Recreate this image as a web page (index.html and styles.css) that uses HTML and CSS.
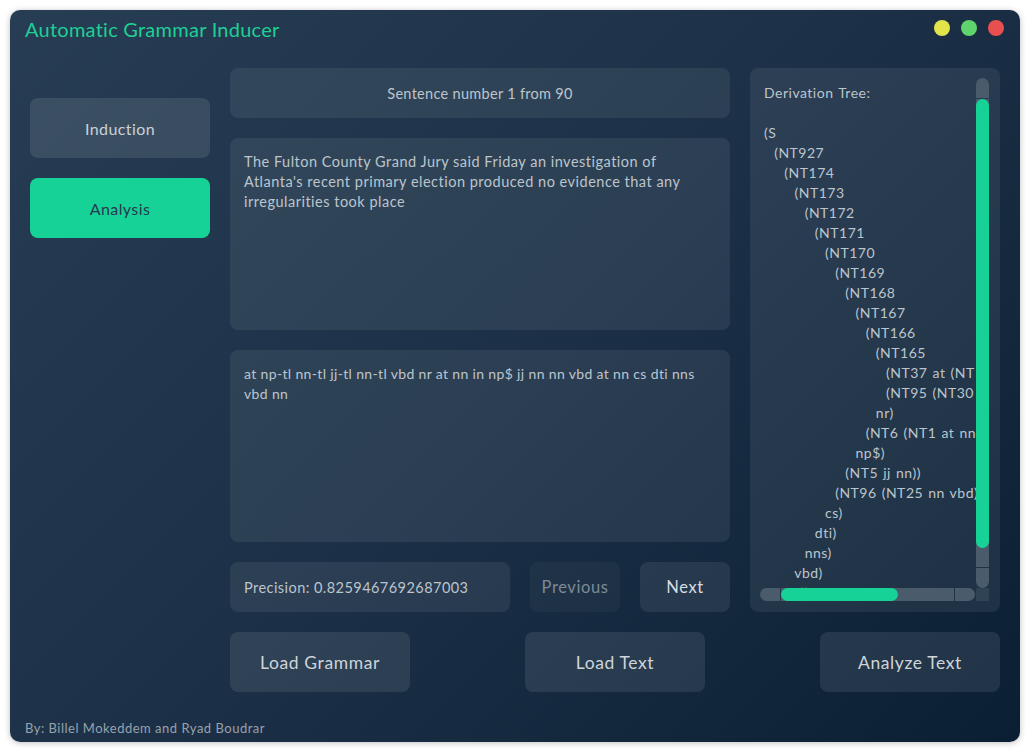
FILE: index.html
```html
<!DOCTYPE html>
<html>
<head>
<meta charset="utf-8">
<link rel="stylesheet" href="styles.css">
</head>
<body>
<div class="window">
  <div class="header">
    <div class="title">Automatic Grammar Inducer</div>
    <div class="dots">
      <span class="dot yellow"></span>
      <span class="dot green"></span>
      <span class="dot red"></span>
    </div>
  </div>
  <div class="main">
    <div class="sidebar">
      <div class="side-btn">Induction</div>
      <div class="side-btn active">Analysis</div>
    </div>
    <div class="center">
      <div class="panel sentence">Sentence number 1 from 90</div>
      <div class="panel textbox sentence-text">The Fulton County Grand Jury said Friday an investigation of Atlanta's recent primary election produced no evidence that any irregularities took place</div>
      <div class="panel textbox tags-text">at np-tl nn-tl jj-tl nn-tl vbd nr at nn in np$ jj nn nn vbd at nn cs dti nns vbd nn</div>
      <div class="nav-row">
        <div class="panel precision">Precision: 0.8259467692687003</div>
        <div class="nav-btn prev">Previous</div>
        <div class="nav-btn next">Next</div>
      </div>
    </div>
    <div class="panel tree">
      <div class="tree-view">
<pre class="tree-text">Derivation Tree:

(S
  (NT927
    (NT174
      (NT173
        (NT172
          (NT171
            (NT170
              (NT169
                (NT168
                  (NT167
                    (NT166
                      (NT165
                        (NT37 at (NT14 nn-tl nn-tl))
                        (NT95 (NT30 jj-tl nn-tl) vbd)
                      nr)
                    (NT6 (NT1 at nn) in)
                  np$)
                (NT5 jj nn))
              (NT96 (NT25 nn vbd) at)
            cs)
          dti)
        nns)
      vbd)
    nn))</pre>
      </div>
      <div class="vscroll">
        <span class="sb-btn top"></span>
        <span class="vtrack"><span class="vthumb"></span></span>
        <span class="sb-btn bottom"></span>
      </div>
      <div class="hscroll">
        <span class="sb-btn left"></span>
        <span class="htrack"><span class="hthumb"></span></span>
        <span class="sb-btn right"></span>
      </div>
      <div class="corner"></div>
    </div>
  </div>
  <div class="actions">
    <div class="action-btn">Load Grammar</div>
    <div class="action-btn">Load Text</div>
    <div class="action-btn">Analyze Text</div>
  </div>
  <div class="footer">By: Billel Mokeddem and Ryad Boudrar</div>
</div>
</body>
</html>
```
FILE: styles.css
```css
* { box-sizing: border-box; }
html, body { margin: 0; padding: 0; background: #ffffff; }
body {
  font-family: "Lato", "Noto Sans", sans-serif;
  width: 1030px;
  height: 752px;
  padding: 10px;
}
.window {
  width: 1010px;
  height: 732px;
  border-radius: 10px;
  background: linear-gradient(135deg, #273d53 0%, #1d3248 45%, #0b1f34 100%);
  box-shadow: 0 1px 6px rgba(0,0,0,0.25);
  display: flex;
  flex-direction: column;
  overflow: hidden;
}
.header {
  height: 58px;
  display: flex;
  justify-content: space-between;
  align-items: flex-start;
  padding: 7px 16px 0 15px;
}
.title {
  color: #1ecf96;
  font-size: 20px;
  line-height: 24px;
  letter-spacing: 0.25px;
}
.dots { display: flex; gap: 11px; padding-top: 3px; }
.dot { width: 16px; height: 16px; border-radius: 50%; display: block; }
.dot.yellow { background: #e3e34a; }
.dot.green { background: #5fd46c; }
.dot.red { background: #e85050; }

.main {
  display: grid;
  grid-template-columns: 180px 500px 250px;
  column-gap: 20px;
  padding-left: 20px;
  height: 544px;
}
.sidebar {
  display: flex;
  flex-direction: column;
  gap: 20px;
  padding-top: 30px;
}
.side-btn {
  height: 60px;
  border-radius: 8px;
  background: rgba(255,255,255,0.1);
  color: #c9d1d8;
  font-size: 16px;
  letter-spacing: 0.4px;
  display: flex;
  align-items: center;
  justify-content: center;
}
.side-btn.active {
  background: #17d296;
  color: #243a50;
}
.center {
  display: flex;
  flex-direction: column;
  gap: 20px;
}
.panel {
  background: rgba(255,255,255,0.07);
  border-radius: 8px;
  color: #bcc5cd;
  font-size: 14px;
}
.sentence {
  height: 50px;
  display: flex;
  align-items: center;
  justify-content: center;
  font-size: 14.5px;
  letter-spacing: 0.3px;
}
.textbox {
  height: 192px;
  padding: 14px 14px;
  line-height: 20px;
}
.sentence-text {
  font-size: 14.5px;
  letter-spacing: 0.5px;
}
.tags-text {
  font-size: 14px;
  letter-spacing: 0.35px;
}
.nav-row {
  display: flex;
  gap: 20px;
  height: 50px;
}
.precision {
  width: 280px;
  display: flex;
  align-items: center;
  padding-left: 14px;
  font-size: 14.5px;
  letter-spacing: 0.45px;
}
.nav-btn {
  width: 90px;
  border-radius: 8px;
  display: flex;
  align-items: center;
  justify-content: center;
  font-size: 16.5px;
  letter-spacing: 0.6px;
}
.nav-btn.prev { background: rgba(255,255,255,0.035); color: #7d8a97; }
.nav-btn.next { background: rgba(255,255,255,0.08); color: #d5dce2; }

.tree {
  position: relative;
  height: 544px;
  overflow: hidden;
}
.tree-view {
  width: 225px;
  height: 520px;
  overflow: hidden;
  margin-left: 14px;
  padding-top: 15px;
}
.tree-text {
  margin: 0;
  font-family: "Lato", "Noto Sans", sans-serif;
  font-size: 14px;
  line-height: 20px;
  color: #bcc5cd;
  white-space: pre;
  letter-spacing: 0.5px;
  word-spacing: 1px;
}
.vscroll {
  position: absolute;
  left: 226px;
  top: 10px;
  width: 13px;
  height: 510px;
  display: flex;
  flex-direction: column;
  gap: 1px;
}
.sb-btn { background: #4a5b6b; display: block; }
.vscroll .sb-btn { height: 20px; }
.vscroll .sb-btn.top { border-radius: 7px 7px 0 0; }
.vscroll .sb-btn.bottom { border-radius: 0 0 7px 7px; }
.vtrack { flex: 1; background: #4a5b6b; display: block; position: relative; }
.vthumb {
  position: absolute;
  left: 0; right: 0; top: 0;
  height: 449px;
  background: #17d296;
  border-radius: 7px;
}
.hscroll {
  position: absolute;
  left: 10px;
  top: 520px;
  width: 215px;
  height: 13px;
  display: flex;
  gap: 1px;
}
.hscroll .sb-btn { width: 20px; }
.hscroll .sb-btn.left { border-radius: 7px 0 0 7px; }
.hscroll .sb-btn.right { border-radius: 0 7px 7px 0; }
.htrack { flex: 1; background: #4a5b6b; display: block; position: relative; }
.hthumb {
  position: absolute;
  top: 0; bottom: 0; left: 0;
  width: 117px;
  background: #17d296;
  border-radius: 7px;
}
.corner {
  position: absolute;
  left: 226px;
  top: 520px;
  width: 13px;
  height: 13px;
  background: #2f4355;
}

.actions {
  display: flex;
  justify-content: space-between;
  padding: 0 20px 0 220px;
  margin-top: 20px;
  height: 60px;
}
.action-btn {
  width: 180px;
  border-radius: 8px;
  background: rgba(255,255,255,0.09);
  color: #cdd4da;
  font-size: 17.5px;
  letter-spacing: 0.6px;
  display: flex;
  align-items: center;
  justify-content: center;
}
.footer {
  margin-top: auto;
  padding: 0 0 6px 15px;
  font-size: 13px;
  letter-spacing: 0.5px;
  color: #97a2ad;
  line-height: 16px;
}
```
